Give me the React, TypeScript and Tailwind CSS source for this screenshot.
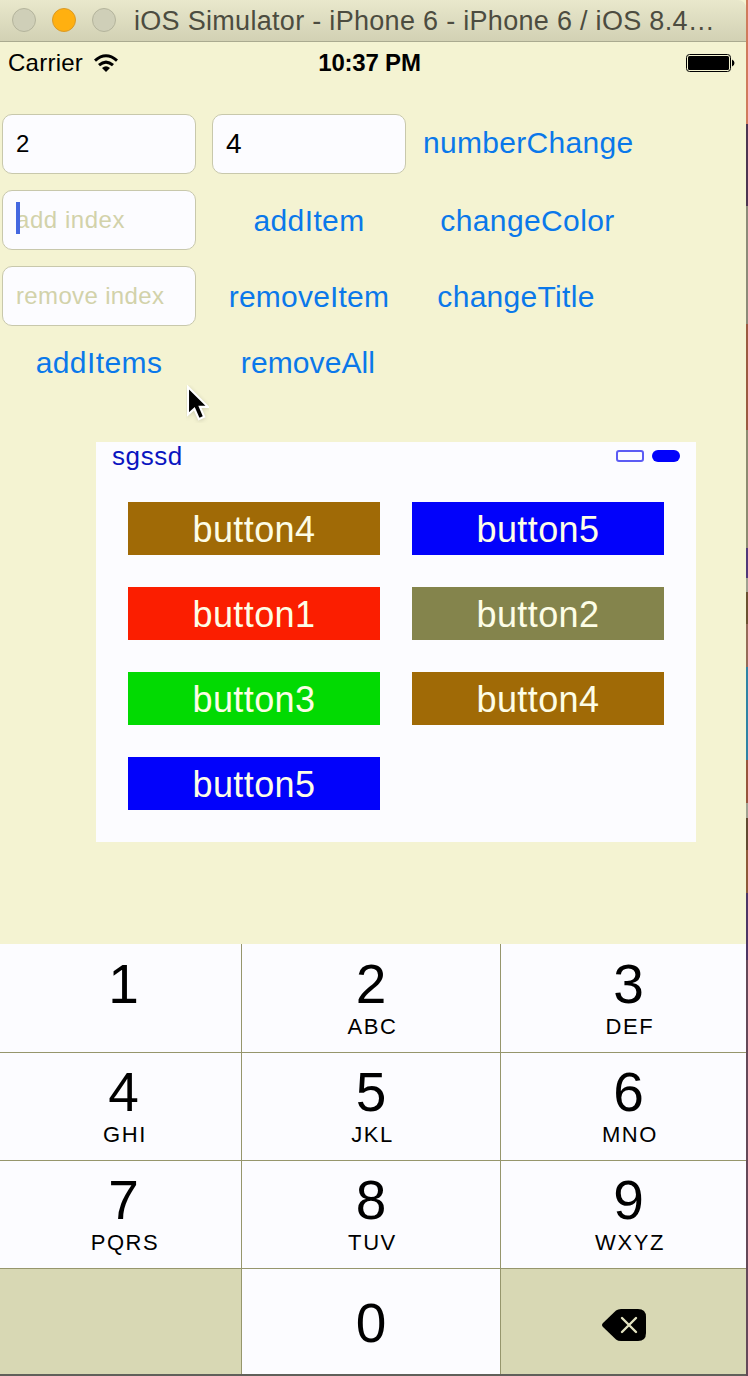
import React from "react";

const keys: { digit: string; letters: string }[] = [
  { digit: "1", letters: "" },
  { digit: "2", letters: "ABC" },
  { digit: "3", letters: "DEF" },
  { digit: "4", letters: "GHI" },
  { digit: "5", letters: "JKL" },
  { digit: "6", letters: "MNO" },
  { digit: "7", letters: "PQRS" },
  { digit: "8", letters: "TUV" },
  { digit: "9", letters: "WXYZ" },
];

const tiles = [
  { label: "button4", color: "bg-[#a06a06]" },
  { label: "button5", color: "bg-[#0202fb]" },
  { label: "button1", color: "bg-[#fb1e00]" },
  { label: "button2", color: "bg-[#84844c]" },
  { label: "button3", color: "bg-[#02da02]" },
  { label: "button4", color: "bg-[#a06a06]" },
  { label: "button5", color: "bg-[#0202fb]" },
];

const desktop = [
  { h: 124, color: "bg-[#d07a5c]" },
  { h: 82, color: "bg-[#4c3450]" },
  { h: 118, color: "bg-[#8c8a78]" },
  { h: 106, color: "bg-[#9a5a40]" },
  { h: 118, color: "bg-[#8c8a70]" },
  { h: 30, color: "bg-[#503878]" },
  { h: 14, color: "bg-[#a0a090]" },
  { h: 32, color: "bg-[#6a5030]" },
  { h: 43, color: "bg-[#946a58]" },
  { h: 93, color: "bg-[#2f82a4]" },
  { h: 43, color: "bg-[#96543c]" },
  { h: 15, color: "bg-[#a0a090]" },
  { h: 32, color: "bg-[#604830]" },
  { h: 43, color: "bg-[#8c5838]" },
  { h: 67, color: "bg-[#4c3464]" },
  { h: 416, color: "bg-[#644858]" },
];

function Field({ children }: { children: React.ReactNode }) {
  return (
    <div className="relative flex h-[60px] w-[194px] items-center rounded-[10px] border border-[#c8c8ac] bg-[#fcfcff] pl-[13px] text-2xl leading-none">
      {children}
    </div>
  );
}

function Action({ children, className = "" }: { children: string; className?: string }) {
  return (
    <button
      className={`whitespace-nowrap text-center text-[30px] leading-[58px] text-[#0a78ea] ${className}`}
    >
      {children}
    </button>
  );
}

function TitleBar() {
  return (
    <header className="flex h-[42px] w-[746px] items-center rounded-tr-lg border-b border-[#aaaa90] bg-linear-to-b from-[#e9e8cc] to-[#d2d1b4] pl-3">
      <div className="-mt-px flex gap-4">
        <span className="size-6 rounded-full border border-[#b4b49c] bg-[#cfcfb8]" />
        <span className="size-6 rounded-full border border-[#d99a28] bg-[#ffb010]" />
        <span className="size-6 rounded-full border border-[#b4b49c] bg-[#cfcfb8]" />
      </div>
      <h1 className="ml-[18px] whitespace-nowrap pt-0.5 text-[27px] leading-[41px] tracking-[0.3px] text-[#4c4c40]">
        iOS Simulator - iPhone 6 - iPhone 6 / iOS 8.4…
      </h1>
    </header>
  );
}

function StatusBar() {
  return (
    <div className="grid h-[42px] w-[735px] grid-cols-3 items-center pl-2 text-2xl leading-[42px] text-black">
      <div className="flex items-center gap-[11px]">
        <span className="tracking-[0.25px]">Carrier</span>
        <svg className="h-[19px] w-6" viewBox="0 0 24 19" fill="none" stroke="#000" strokeWidth="3">
          <path d="M1 6.6Q12 -3 23 6.6" />
          <path d="M5 11.2Q12 5 19 11.2" />
          <path d="M8 14Q12 10.6 16 14L12 18Z" fill="#000" stroke="none" />
        </svg>
      </div>
      <span className="whitespace-nowrap pr-1 text-center font-bold tracking-[-0.2px]">10:37 PM</span>
      <svg className="h-5 w-[50px] justify-self-end" viewBox="0 0 50 20">
        <rect x="1.5" y="1.5" width="44" height="17" rx="3" fill="none" stroke="#000" />
        <rect x="3" y="3" width="41" height="14" rx="1.5" fill="#000" />
        <path d="M47 6.5Q49.500 7.500 49.500 10T47 13.500Z" fill="#000" />
      </svg>
    </div>
  );
}

function Controls() {
  return (
    <section className="relative mt-[30px] pl-0.5">
      <div className="grid grid-cols-[194px_194px_210px] gap-4">
        <Field>2</Field>
        <Field>
          <span className="text-[28px]">4</span>
        </Field>
        <Action className="ml-px h-[58px] tracking-[0.3px]">numberChange</Action>

        <Field>
          <span className="tracking-[0.55px] text-[#d2d2aa]">add index</span>
          <span className="absolute left-[13px] top-[11px] h-8 w-1 bg-[#4468e0]" />
        </Field>
        <Action className="pt-0.5 tracking-[0.4px]">addItem</Action>
        <Action className="ml-px pt-0.5 tracking-[0.4px]">changeColor</Action>

        <Field>
          <span className="tracking-[0.35px] text-[#d2d2aa]">remove index</span>
        </Field>
        <Action className="pt-0.5 tracking-[0.2px]">removeItem</Action>
        <Action className="pr-[22px] pt-0.5 tracking-[0.3px]">changeTitle</Action>
      </div>
      <div className="mt-2 grid h-[58px] grid-cols-[194px_194px] gap-4">
        <Action className="tracking-[0.4px]">addItems</Action>
        <Action className="pr-0.5 tracking-[0.1px]">removeAll</Action>
      </div>
      <svg className="absolute left-[186px] top-[271px] h-[38px] w-[23px]" viewBox="0 0 24 40">
        <path
          d="M2 2V31L8.7 25L13.5 36L19 33.5L14.5 23H23Z"
          fill="#000"
          stroke="#fff"
          strokeWidth="2.2"
          className="drop-shadow-sm"
        />
      </svg>
    </section>
  );
}

function Panel() {
  return (
    <section className="ml-24 mt-[50px] h-[400px] w-[600px] bg-[#fcfcff]">
      <div className="flex h-[60px] items-start justify-between px-4">
        <span className="text-[26px] leading-7 tracking-[0.6px] text-[#0a14c0]">sgssd</span>
        <div className="flex gap-2 pt-2">
          <span className="h-3 w-7 rounded-[3px] border-2 border-[#5c5cf4]" />
          <span className="h-3 w-7 rounded-full bg-[#0202fb]" />
        </div>
      </div>
      <div className="grid grid-cols-2 gap-8 px-8">
        {tiles.map((t, i) => (
          <button
            key={i}
            className={`h-[53px] text-center text-4xl leading-[55px] tracking-[0.4px] text-[#fdfde6] ${t.color}`}
          >
            {t.label}
          </button>
        ))}
      </div>
    </section>
  );
}

function Keypad() {
  return (
    <section className="mt-[102px] grid h-[432px] w-[746px] grid-cols-[241px_258px_245px] grid-rows-[108px_107px_107px_105px] gap-px border-b-2 border-[#60605a] bg-[#96966c] text-black">
      {keys.map((k, i) => (
        <button
          key={k.digit}
          className={`flex flex-col items-center bg-[#fcfcff] ${i % 3 === 0 ? "pl-1.5" : ""} ${i % 3 === 2 ? "pl-2.5" : ""} ${i < 3 ? "pt-px" : ""}`}
        >
          <span className="-mt-px text-[55px] leading-[80px]">{k.digit}</span>
          <span className="-mt-[7px] pl-[3px] text-[22px] leading-5 tracking-[1.6px]">{k.letters}</span>
        </button>
      ))}
      <span className="bg-[#d8d8b4]" />
      <button className="bg-[#fcfcff] text-[55px] leading-[108px]">0</button>
      <button className="flex items-center justify-center bg-[#d8d8b4] pt-[7px]">
        <svg className="h-8 w-11" viewBox="0 0 44 32">
          <path
            d="M14 1.5Q16 0 19 0H36Q44 0 44 8V24Q44 32 36 32H19Q16 32 14 30.5L1 18Q-1 16 1 14Z"
            fill="#000"
          />
          <path d="M20 9L34 23M34 9L20 23" stroke="#e2e2c0" strokeWidth="2.4" strokeLinecap="round" />
        </svg>
      </button>
    </section>
  );
}

export default function App() {
  return (
    <div className="flex h-[1376px] w-[748px] overflow-hidden bg-[#f4f3d2] font-['Liberation_Sans',Arial,sans-serif]">
      <main className="w-[746px] shrink-0">
        <TitleBar />
        <StatusBar />
        <Controls />
        <Panel />
        <Keypad />
      </main>
      <aside className="flex w-0.5 flex-col">
        {desktop.map((s, i) => (
          <span key={i} className={`shrink-0 ${s.color}`} style={{ height: s.h }} />
        ))}
      </aside>
    </div>
  );
}
